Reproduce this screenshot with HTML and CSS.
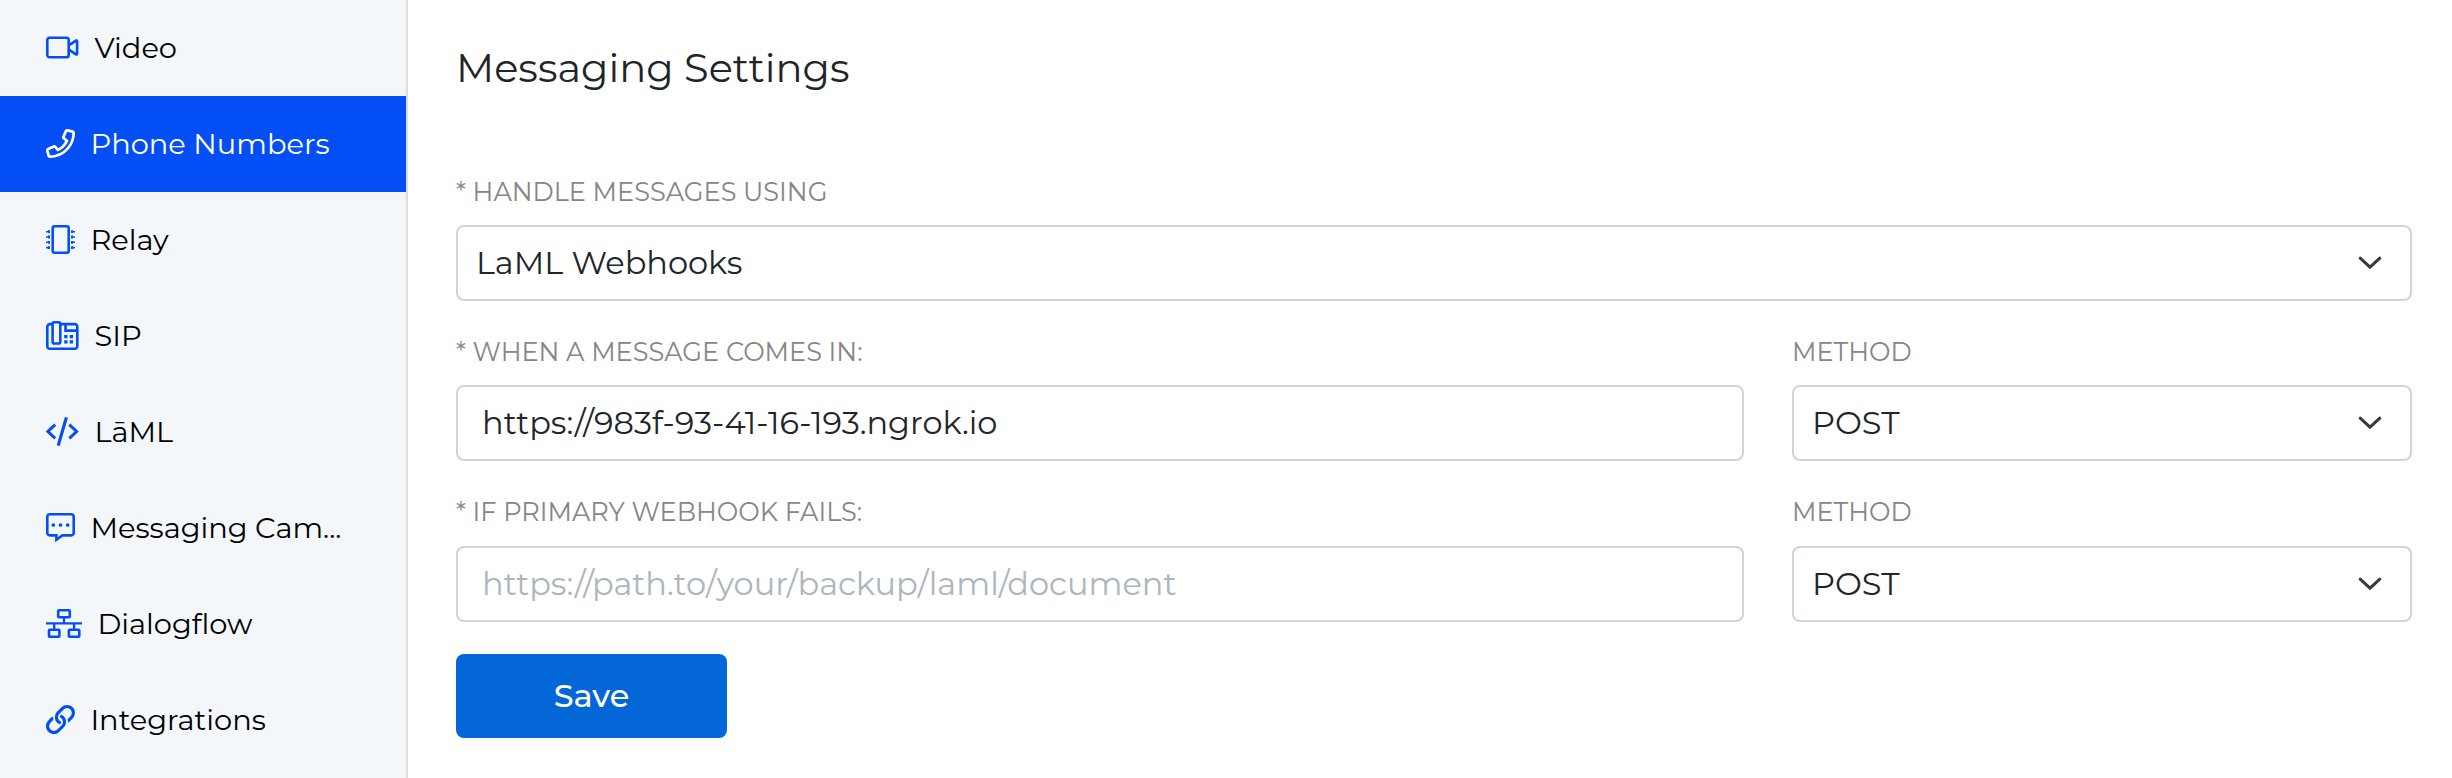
FILE: index.html
```html
<!DOCTYPE html>
<html lang="en">
<head>
<meta charset="utf-8">
<title>Messaging Settings</title>
<link rel="stylesheet" href="styles.css">
</head>
<body>
<div class="layout">
  <nav class="sidebar">
    <a class="nav-item">
      <svg class="icon" width="33" height="29" viewBox="0 0 33 29"><rect x="1.3" y="4.8" width="21.4" height="19.4" rx="2.2"/><path d="M23.2 12.2 30 7.6c.6-.4 1.1 0 1.1.6v12.6c0 .6-.5 1-1.1.6L23.2 16.8" /></svg>
      <span>Video</span>
    </a>
    <a class="nav-item active">
      <svg class="icon solid" width="29" height="29" viewBox="0 0 512 512"><path d="M476.5 22.9L382.3 1.2c-21.6-5-43.6 6.2-52.3 26.6l-43.5 101.5c-8 18.6-2.6 40.6 13.1 53.4l40 32.7C311 267.8 267.8 311 215.4 339.5l-32.7-40c-12.8-15.7-34.8-21.1-53.4-13.1L27.7 329.9c-20.4 8.7-31.5 30.7-26.6 52.3l21.7 94.2c4.8 20.9 23.2 35.5 44.6 35.5C312.3 512 512 313.7 512 67.5c0-21.4-14.6-39.8-35.5-44.6zM69.3 464l-20.9-90.7 98.2-42.1 55.7 68.1c98.8-46.4 150.6-98 197-197l-68.1-55.7 42.1-98.2L464 69.3C463 286.9 286.9 463 69.3 464z"/></svg>
      <span>Phone Numbers</span>
    </a>
    <a class="nav-item">
      <svg class="icon" width="29" height="29" viewBox="0 0 29 29"><rect x="6.7" y="1.3" width="16" height="26.4" rx="2"/><path class="pins" d="M0 6.7h4M0 12h4M0 17.3h4M0 22.6h4M25 6.7h4M25 12h4M25 17.3h4M25 22.6h4"/><path class="pin-heads" d="M2 6.7h2M2 12h2M2 17.3h2M2 22.6h2M25 6.7h2M25 12h2M25 17.3h2M25 22.6h2"/></svg>
      <span>Relay</span>
    </a>
    <a class="nav-item">
      <svg class="icon" width="33" height="29" viewBox="0 0 33 29"><path d="M6.5 3.1H4.2a2.9 2.9 0 0 0-2.9 2.9v19.2a2.5 2.5 0 0 0 2.5 2.5h25a2.5 2.5 0 0 0 2.5-2.5V5.6a2.5 2.5 0 0 0-2.5-2.5H14.3"/><rect x="6.6" y="1.3" width="7.7" height="21.2" rx="1.8"/><path d="M19.5 3.1V9.6H31"/><path class="keys" d="M18.2 14h3.3v3.3h-3.3zM23.7 14H27v3.3h-3.3zM18.2 19.3h3.3v3.3h-3.3zM23.7 19.3H27v3.3h-3.3z"/></svg>
      <span>SIP</span>
    </a>
    <a class="nav-item">
      <svg class="icon" width="33" height="29" viewBox="0 0 33 29"><path class="code" d="M9.2 7.7 1.9 14.5l7.3 6.8M23.3 7.7l7.3 6.8-7.3 6.8"/><path class="slash" d="M20.4.4 12.2 28.6"/></svg>
      <span>LāML</span>
    </a>
    <a class="nav-item">
      <svg class="icon" width="29" height="29" viewBox="0 0 29 29"><path d="M3.8 1.3h21.4a2.5 2.5 0 0 1 2.5 2.5v16.1a2.5 2.5 0 0 1-2.5 2.5h-8.8l-6 4.3v-4.3H3.8a2.5 2.5 0 0 1-2.5-2.5V3.8a2.5 2.5 0 0 1 2.5-2.5z"/><g class="dots"><circle cx="7.3" cy="12" r="1.85"/><circle cx="14.5" cy="12" r="1.85"/><circle cx="21.7" cy="12" r="1.85"/></g></svg>
      <span>Messaging Cam...</span>
    </a>
    <a class="nav-item">
      <svg class="icon" width="36" height="29" viewBox="0 0 36 29"><rect x="12.2" y="1.3" width="11.6" height="7" rx=".8"/><rect x="3" y="20.8" width="10.4" height="6.9" rx=".8"/><rect x="22.9" y="20.8" width="10.4" height="6.9" rx=".8"/><path class="wires" d="M0 14.4h36M18 8.3v6M8.2 14.4v6.4M28.1 14.4v6.4"/></svg>
      <span>Dialogflow</span>
    </a>
    <a class="nav-item">
      <svg class="icon solid" width="29" height="29" viewBox="0 0 512 512"><path d="M314.222 197.78c51.091 51.091 54.377 132.287 9.75 187.16-6.242 7.73-2.784 3.865-84.94 86.02-54.696 54.696-143.266 54.745-197.99 0-54.711-54.69-54.734-143.255 0-197.99 32.773-32.773 51.835-51.899 63.409-63.457 7.463-7.452 20.331-2.354 20.486 8.192a173.31 173.31 0 0 0 4.746 37.828c.966 4.029-.272 8.269-3.202 11.198L80.632 312.57c-32.755 32.775-32.887 85.892 0 118.8 32.775 32.755 85.892 32.887 118.8 0l75.19-75.2c32.718-32.725 32.777-86.013 0-118.79a83.722 83.722 0 0 0-22.814-16.229c-4.623-2.233-7.182-7.25-6.561-12.346 1.356-11.122 6.296-21.885 14.815-30.405l4.375-4.375c3.625-3.626 9.177-4.594 13.76-2.294 12.999 6.524 25.187 15.211 36.025 26.049zM470.958 41.04c-54.724-54.745-143.294-54.696-197.99 0-82.156 82.156-78.698 78.29-84.94 86.02-44.627 54.873-41.341 136.069 9.75 187.16 10.838 10.838 23.026 19.525 36.025 26.049 4.582 2.3 10.134 1.331 13.76-2.294l4.375-4.375c8.52-8.519 13.459-19.283 14.815-30.405.621-5.096-1.938-10.113-6.561-12.346a83.706 83.706 0 0 1-22.814-16.229c-32.777-32.777-32.718-86.065 0-118.79l75.19-75.2c32.908-32.887 86.025-32.755 118.8 0 32.887 32.908 32.755 86.025 0 118.8l-45.848 45.84c-2.93 2.929-4.168 7.169-3.202 11.198a173.31 173.31 0 0 1 4.746 37.828c.155 10.546 13.023 15.644 20.486 8.192 11.574-11.558 30.636-30.684 63.409-63.457 54.733-54.735 54.71-143.3-.001-197.991z"/></svg>
      <span>Integrations</span>
    </a>
  </nav>

  <main class="content">
    <h1 class="title">Messaging Settings</h1>

    <div class="row">
      <div class="field">
        <div class="label">* HANDLE MESSAGES USING</div>
        <div class="control select"><span>LaML Webhooks</span><svg class="chevron" width="24" height="14" viewBox="0 0 24 14"><path d="M2.2 2.2 12 11.2l9.8-9"/></svg></div>
      </div>
    </div>

    <div class="row">
      <div class="field">
        <div class="label">* WHEN A MESSAGE COMES IN:</div>
        <div class="control input"><span>https://983f-93-41-16-193.ngrok.io</span></div>
      </div>
      <div class="field method">
        <div class="label">METHOD</div>
        <div class="control select"><span>POST</span><svg class="chevron" width="24" height="14" viewBox="0 0 24 14"><path d="M2.2 2.2 12 11.2l9.8-9"/></svg></div>
      </div>
    </div>

    <div class="row fallback">
      <div class="field">
        <div class="label">* IF PRIMARY WEBHOOK FAILS:</div>
        <div class="control input"><span class="placeholder">https://path.to/your/backup/laml/document</span></div>
      </div>
      <div class="field method">
        <div class="label">METHOD</div>
        <div class="control select"><span>POST</span><svg class="chevron" width="24" height="14" viewBox="0 0 24 14"><path d="M2.2 2.2 12 11.2l9.8-9"/></svg></div>
      </div>
    </div>

    <button class="save">Save</button>
  </main>
</div>
</body>
</html>
```
FILE: styles.css
```css
* { box-sizing: border-box; }

body {
  margin: 0;
  background: #fff;
  color: #212529;
  font-family: Montserrat, Inter, "Open Sans", sans-serif;
}

.layout { display: flex; height: 778px; overflow: hidden; }

/* Sidebar */
.sidebar {
  flex: none;
  width: 408px;
  background: #f3f7fa;
  border-right: 2px solid #dcdddf;
}

.nav-item {
  display: flex;
  align-items: center;
  gap: 15.4px;
  height: 96px;
  padding: 0 0 1px 46px;
  color: #000;
  font-size: 28.9px;
  line-height: 39px;
  white-space: nowrap;
}

.nav-item.active { background: #044ef5; color: #fff; }

.icon {
  flex: none;
  fill: none;
  stroke: #044ef5;
  stroke-width: 2.6;
  overflow: visible;
}
.icon.solid { fill: #044ef5; stroke: none; }
.active .icon.solid { fill: #fff; }
.pins { stroke-width: 1.6; }
.pin-heads { stroke-width: 2.8; }
.keys, .dots { fill: #044ef5; stroke: none; }
.code { stroke-width: 3; }
.slash { stroke-width: 3.2; }
.wires { stroke-width: 2.3; }

/* Main panel */
.content { flex: 1; padding: 44px 40px 0 48px; }

.title {
  margin: 0 0 84px;
  font-size: 40px;
  font-weight: 400;
  line-height: 48px;
}

.row { display: flex; gap: 48px; margin-bottom: 35px; }
.row.fallback { margin-bottom: 32px; }
.field { flex: 1; }
.field.method { flex: 0 0 620px; }

.label {
  margin-bottom: 17px;
  color: #868686;
  font-size: 25.6px;
  line-height: 32px;
  white-space: nowrap;
}
.fallback .label { margin-bottom: 18px; }

.control {
  display: flex;
  align-items: center;
  justify-content: space-between;
  height: 76px;
  padding-bottom: 1px;
  border: 2px solid #ced4da;
  border-radius: 8px;
  font-size: 32px;
  line-height: 44px;
}
.select { padding-left: 18px; padding-right: 28px; }
.input { padding-left: 24px; }
.placeholder { color: #adb5bd; }

.chevron { fill: none; stroke: #343a40; stroke-width: 3; stroke-linecap: round; }

.save {
  display: block;
  width: 271px;
  height: 84px;
  padding: 0;
  border: 0;
  border-radius: 8px;
  background: #0467d8;
  color: #fff;
  font: 500 32px/44px Montserrat, Inter, "Open Sans", sans-serif;
}
```
